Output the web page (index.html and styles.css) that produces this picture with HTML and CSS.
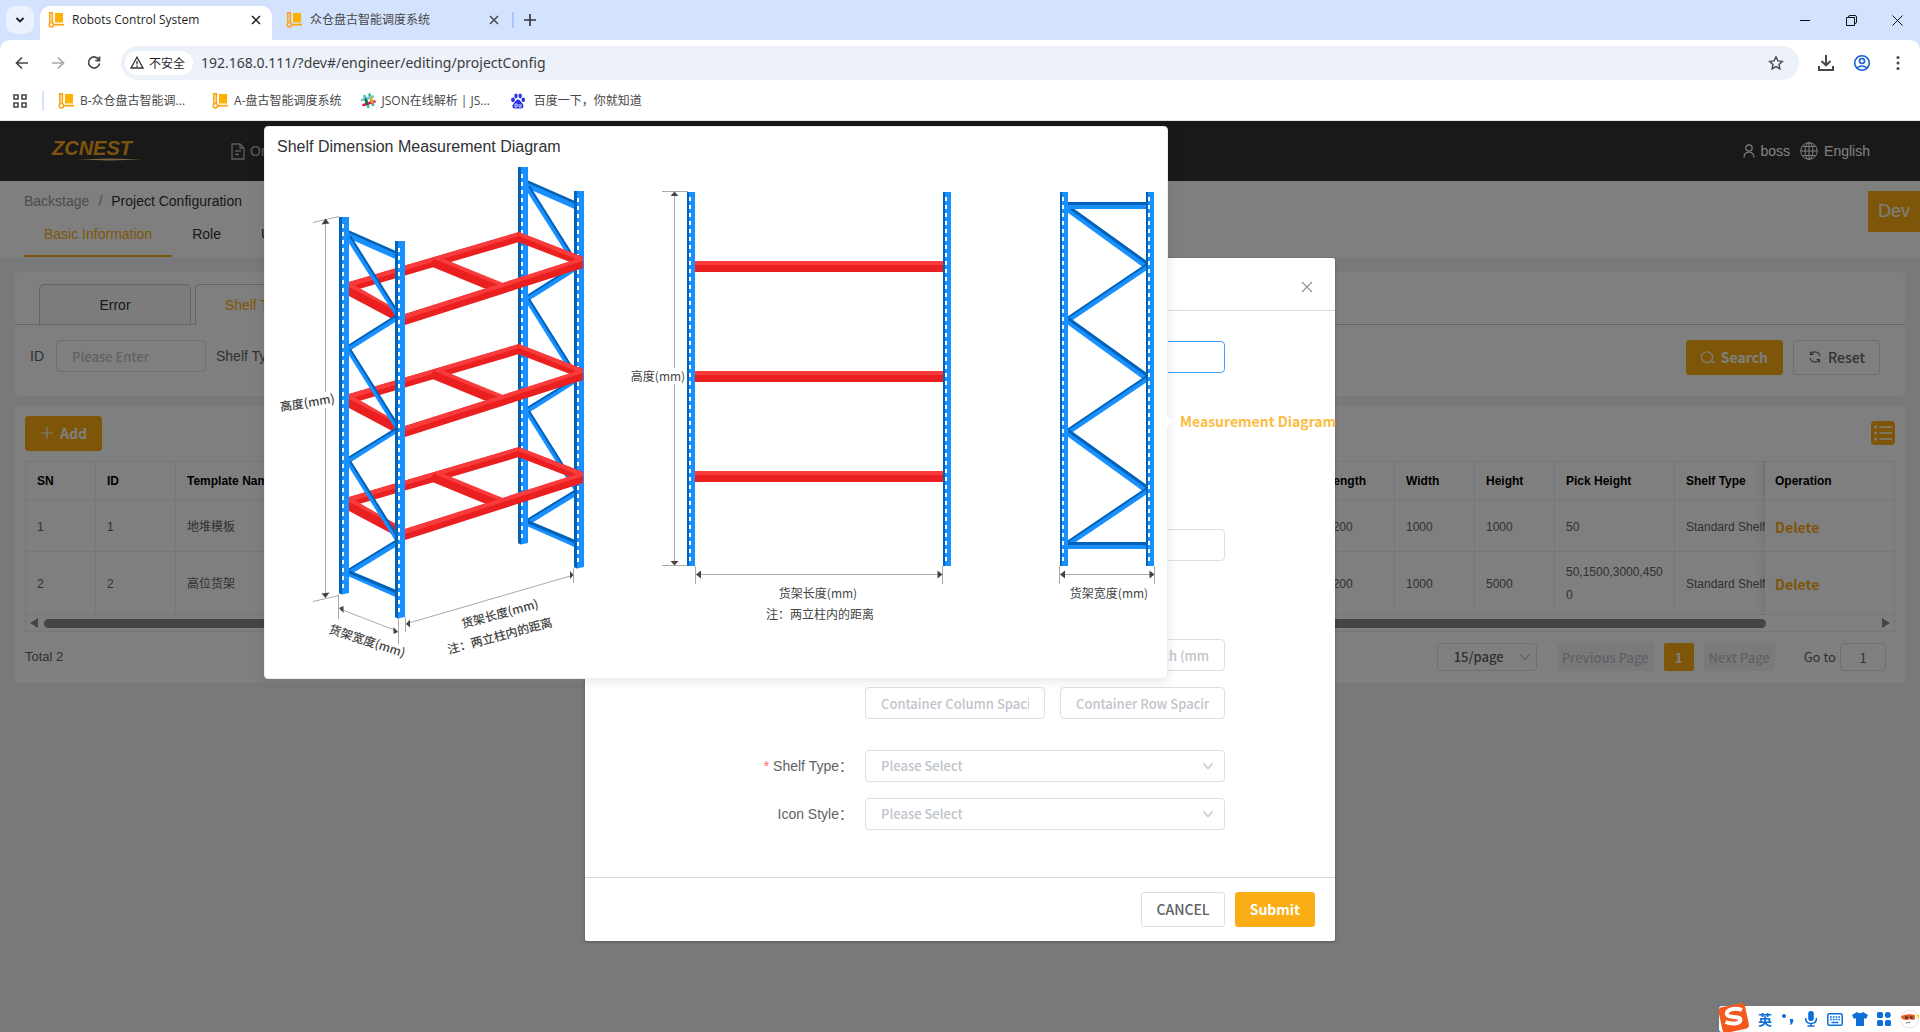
FILE: index.html
```html
<!DOCTYPE html>
<html lang="en">
<head>
<meta charset="utf-8">
<title>Robots Control System</title>
<link rel="stylesheet" href="styles.css">
</head>
<body>
<svg class="defs" aria-hidden="true">
  <defs>
    <symbol id="fav" viewBox="0 0 16 16">
      <path d="M.8.8H4.300V10.500M1.800 1V10.500" fill="none" stroke="#fba414" stroke-width="1.600"/>
      <circle cx="3.400" cy="12.700" r="2.200" fill="none" stroke="#fba414" stroke-width="1.500"/>
      <path d="M7 1h8v9.500H7z" fill="#ffb000"/><path d="M6 11.800h10v1.800H6z" fill="#fba414"/>
    </symbol>
    <symbol id="caret" viewBox="0 0 12 12"><path d="M1.500 3.500 6 8.500l4.500-5" fill="none" stroke="#c0c4cc" stroke-width="1.200"/></symbol>
    <g id="post-iso">
      <path d="M0 0h10v376l-7 1.500L0 376z" fill="#1890ff"/>
      <path d="M0 0h3v377.500L0 376z" fill="#0062b8"/>
      <path d="M4 7v364" stroke="#fff" stroke-width="2" stroke-dasharray="4 4"/>
    </g>
    <g id="post">
      <path d="M0 0h8v374H0z" fill="#1890ff"/>
      <path d="M0 0h2v374H0z" fill="#0062b8"/>
      <path d="M3 5v365" stroke="#fff" stroke-width="2" stroke-dasharray="4 4"/>
    </g>
    <g id="frame">
      <g stroke="#1890ff" stroke-width="5" fill="none">
        <path d="M347 235 397 257M348 237 397 314M397 318 348 349M348 349 397 427M397 430 348 461M348 461 397 539M397 543 348 573M347 573 397 595"/>
      </g>
      <g stroke="#0062b8" stroke-width="3" fill="none">
        <path d="M347 231 397 253"/>
        <path d="M350 236 397 311M350 349 397 424M350 461 397 536" stroke-width="2"/>
        <path d="M397 315 348 346M397 428 348 458M397 540 348 570" stroke-width="2"/>
        <path d="M347 571 397 592"/>
      </g>
      <use href="#post-iso" x="339" y="217"/>
      <use href="#post-iso" x="395" y="241"/>
    </g>
    <g id="shelf">
      <path d="M349 282 519 232V242L349 292z" fill="#ea1f1f"/>
      <path d="M349 282 519 232V236L349 287z" fill="#f93b3b"/>
      <path d="M349 284 396 309V321L349 296z" fill="#ea1f1f"/>
      <path d="M349 282 396 309V311L349 287z" fill="#f93b3b"/>
      <path d="M434 258 501 284 486 289 430 266z" fill="#ea1f1f"/>
      <path d="M439 257 503 283 498 285 434 259z" fill="#f93b3b"/>
      <path d="M518 232 583 257V267L518 242z" fill="#ea1f1f"/>
      <path d="M519 232 583 257V262L519 236z" fill="#f93b3b"/>
      <path d="M405 314 583 258V268L405 325z" fill="#ea1f1f"/>
      <path d="M405 314 583 257V261L405 319z" fill="#f93b3b"/>
    </g>
  </defs>
</svg>

<header class="browser">
  <div class="tabstrip">
    <button class="tab-search" aria-label="Search tabs"><svg width="10" height="10" viewBox="0 0 10 10"><path d="M1.500 3 5 6.500 8.500 3" fill="none" stroke="#1f1f1f" stroke-width="1.800"/></svg></button>
    <div class="tab tab-active"><svg class="fav"><use href="#fav"/></svg><span>Robots Control System</span><button class="x" aria-label="Close tab"><svg width="10" height="10" viewBox="0 0 10 10"><path d="m1 1 8 8M9 1 1 9" stroke="#1f1f1f" stroke-width="1.500"/></svg></button></div>
    <div class="tab"><svg class="fav"><use href="#fav"/></svg><span>众仓盘古智能调度系统</span><button class="x" aria-label="Close tab"><svg width="10" height="10" viewBox="0 0 10 10"><path d="m1 1 8 8M9 1 1 9" stroke="#474747" stroke-width="1.500"/></svg></button></div>
    <button class="newtab" aria-label="New tab"><svg width="12" height="12" viewBox="0 0 12 12"><path d="M6 0v12M0 6h12" stroke="#333" stroke-width="1.600"/></svg></button>
    <div class="winctl">
      <button aria-label="Minimise"><svg width="11" height="11" viewBox="0 0 11 11"><path d="M0 5.500h10" stroke="#111"/></svg></button>
      <button aria-label="Restore"><svg width="11" height="11" viewBox="0 0 11 11"><path d="M.5 2.500h8v8h-8zM2.500 2.500V2Q2.500.5 4 .5h5Q10.500.5 10.500 2v5Q10.500 8.500 9 8.500" fill="none" stroke="#111"/></svg></button>
      <button aria-label="Close"><svg width="11" height="11" viewBox="0 0 11 11"><path d="m.5.5 10 10M10.500.5l-10 10" stroke="#111"/></svg></button>
    </div>
  </div>
  <div class="toolbar">
    <button aria-label="Back"><svg width="16" height="16" viewBox="0 0 16 16"><path d="M14 8H3M8 2.500 2.500 8 8 13.500" fill="none" stroke="#474747" stroke-width="1.700"/></svg></button>
    <button aria-label="Forward"><svg width="16" height="16" viewBox="0 0 16 16"><path d="M2 8h11M8 2.500 13.500 8 8 13.500" fill="none" stroke="#a8a8a8" stroke-width="1.700"/></svg></button>
    <button aria-label="Reload"><svg width="16" height="16" viewBox="0 0 16 16"><path d="M13 5A5.500 5.500 0 1 0 13.500 8.500M13.500 1.500V5.700H9.300" fill="none" stroke="#474747" stroke-width="1.700"/></svg></button>
    <div class="omnibox">
      <button class="chip"><svg width="14" height="13" viewBox="0 0 14 13"><path d="M7 1.200 13 12H1zM7 5v3.500M7 9.500V11" fill="none" stroke="#333" stroke-width="1.300"/></svg>不安全</button>
      <input class="url" aria-label="Address" value="192.168.0.111/?dev#/engineer/editing/projectConfig">
      <button class="star" aria-label="Bookmark"><svg width="16" height="16" viewBox="0 0 16 16"><path d="m8 1.800 1.900 4.100 4.400.5-3.300 3 .9 4.400L8 11.600l-3.900 2.200.9-4.400-3.300-3 4.400-.5z" fill="none" stroke="#474747" stroke-width="1.400"/></svg></button>
    </div>
    <button class="tool" aria-label="Downloads"><svg width="18" height="18" viewBox="0 0 18 18"><path d="M9 1v10M4.500 7 9 11.300 13.500 7M2 12v4h14v-4" fill="none" stroke="#474747" stroke-width="2"/></svg></button>
    <button class="tool" aria-label="Profile"><svg width="18" height="18" viewBox="0 0 18 18" fill="none" stroke="#1a5fd0" stroke-width="1.600"><circle cx="9" cy="9" r="7.300"/><circle cx="9" cy="7" r="2.500"/><path d="M4 14q5-4 10 0"/></svg></button>
    <button class="tool" aria-label="Menu"><svg width="18" height="18" viewBox="0 0 18 18" fill="#474747"><circle cx="9" cy="3.500" r="1.500"/><circle cx="9" cy="9" r="1.500"/><circle cx="9" cy="14.500" r="1.500"/></svg></button>
  </div>
  <nav class="bookmarks" aria-label="Bookmarks">
    <svg class="apps" width="14" height="14" viewBox="0 0 14 14"><path d="M1 1h4v4H1zM9 1h4v4H9zM1 9h4v4H1zM9 9h4v4H9z" fill="none" stroke="#474747" stroke-width="1.600"/></svg>
    <a href="#"><svg class="fav"><use href="#fav"/></svg>B-众仓盘古智能调...</a>
    <a href="#" class="bm-a"><svg class="fav"><use href="#fav"/></svg>A-盘古智能调度系统</a>
    <a href="#" class="bm-json"><svg class="fav" viewBox="0 0 16 16"><g stroke-width="2.600" stroke-linecap="round"><path d="M4.500 3 8.300 14" stroke="#36c5b0"/><path d="M9.500 1.500 13 12" stroke="#3eb890"/><path d="M2 7 13 3.500" stroke="#70cadb"/><path d="M3.500 12 14.500 8.500" stroke="#e01765"/><path d="M5.800 6.500 7.200 10.700" stroke="#1d6b3a"/><path d="M10.900 5.200 12.400 9.400" stroke="#e9a820"/></g></svg>JSON在线解析 | JS...</a>
    <a href="#" class="bm-bd"><svg class="fav" viewBox="0 0 16 16" fill="#2932e1"><ellipse cx="3" cy="6.800" rx="1.900" ry="2.400"/><ellipse cx="6" cy="3" rx="1.700" ry="2.400"/><ellipse cx="10.200" cy="3" rx="1.700" ry="2.400"/><ellipse cx="13.300" cy="6.800" rx="1.800" ry="2.300"/><path d="M8 6.500c2 0 2.500 2 4 3.500 2.500 2.500 1.500 5.500-1 5.500H5c-2.800 0-3.500-3-1-5.500 1.500-1.500 2-3.500 4-3.500z"/><path d="M5 11h2v3H5zM9 11v3h2v-3" fill="none" stroke="#fff" stroke-width=".8"/></svg>百度一下，你就知道</a>
  </nav>
</header>

<div class="viewport">
  <header class="appbar">
    <div class="logo"><span>ZCNEST</span><svg width="64" height="3" viewBox="0 0 64 3"><path d="M0 1.500 32 .5l32 1-32 1z" fill="#f8cf80"/></svg></div>
    <a class="menu" href="#"><svg width="14" height="17" viewBox="0 0 14 17"><path d="M1 1h8l4 4v11H1zM9 1v4h4M4 8h6M4 11.500h4" fill="none" stroke="#bbb" stroke-width="1.300"/></svg>Or</a>
    <div class="userbox">
      <span class="user"><svg width="12" height="14" viewBox="0 0 12 14"><circle cx="6" cy="4" r="3.200" fill="none" stroke="#fff" stroke-width="1.200"/><path d="M1 13.500q0-5 5-5.500 5 .5 5 5.500" fill="none" stroke="#fff" stroke-width="1.200"/></svg>boss</span>
      <span class="lang"><svg width="18" height="18" viewBox="0 0 18 18" fill="none" stroke="#fff"><circle cx="9" cy="9" r="8.300"/><ellipse cx="9" cy="9" rx="4" ry="8.300"/><path d="M9 .7v16.600M.7 9h16.600M2.300 4.500h13.400M2.300 13.500h13.400"/></svg>English</span>
    </div>
  </header>
  <div class="subhead">
    <nav class="crumbs"><a href="#">Backstage</a><i>/</i><span>Project Configuration</span></nav>
    <nav class="maintabs"><a href="#" class="on">Basic Information</a><a href="#">Role</a><a href="#">User</a></nav>
  </div>
  <button class="dev">Dev</button>

  <main>
    <section class="card filter">
      <div class="subtabs"><button>Error</button><button class="on">Shelf Template</button></div>
      <form class="search">
        <label for="q-id">ID</label><input id="q-id" placeholder="Please Enter">
        <label for="q-type">Shelf Type</label><input id="q-type" placeholder="Please Select">
        <button type="button" class="btn primary push"><svg width="14" height="14" viewBox="0 0 14 14"><path d="M9.800 11.200A5.500 5.500 0 1 1 11 9.500M10 10l3 3" fill="none" stroke="#fff" stroke-width="1.200"/></svg>Search</button>
        <button type="button" class="btn"><svg width="14" height="14" viewBox="0 0 14 14" fill="none" stroke="#606266" stroke-width="1.200"><path d="M12 6A5 5 0 0 0 4 3L2.500 4.500M2.500 1.500v3h3M2 8a5 5 0 0 0 8 3l1.500-1.500M11.500 12.500v-3h-3"/></svg>Reset</button>
      </form>
    </section>

    <section class="card list">
      <div class="listbar">
        <button class="btn primary"><svg width="14" height="14" viewBox="0 0 14 14"><path d="M7 1v12M1 7h12" stroke="#fff" stroke-width="1.200"/></svg>Add</button>
        <button class="cols" aria-label="Columns"><svg width="24" height="24" viewBox="0 0 24 24"><g fill="#fff"><circle cx="4.500" cy="6" r="1.500"/><circle cx="4.500" cy="12" r="1.500"/><circle cx="4.500" cy="18" r="1.500"/></g><path d="M8.500 6H21M8.500 12H21M8.500 18H21" stroke="#fff" stroke-width="1.700"/></svg></button>
      </div>
      <div class="tablebox">
        <table>
          <colgroup><col class="w70"><col class="w80"><col><col class="w80"><col class="w80"><col class="w80"><col class="w120"><col class="w90"><col class="w129"></colgroup>
          <thead><tr><th>SN</th><th>ID</th><th>Template Name</th><th>Length</th><th>Width</th><th>Height</th><th>Pick Height</th><th>Shelf Type</th><th class="op">Operation</th></tr></thead>
          <tbody>
            <tr><td>1</td><td>1</td><td>地堆模板</td><td>1200</td><td>1000</td><td>1000</td><td>50</td><td class="clip">Standard Shelf</td><td class="op"><a href="#">Delete</a></td></tr>
            <tr class="tall"><td>2</td><td>2</td><td>高位货架</td><td>1200</td><td>1000</td><td>5000</td><td>50,1500,3000,4500</td><td class="clip">Standard Shelf</td><td class="op"><a href="#">Delete</a></td></tr>
          </tbody>
        </table>
        <div class="hscroll"><svg width="8" height="10" viewBox="0 0 8 10"><path d="M8 0v10L0 5z" fill="#8b8b8b"/></svg><span class="thumb"></span><svg class="end" width="8" height="10" viewBox="0 0 8 10"><path d="M0 0v10l8-5z" fill="#8b8b8b"/></svg></div>
      </div>
      <div class="pager">
        <span class="total">Total 2</span>
        <div class="selbox pagesize"><select aria-label="Page size"><option>15/page</option></select><svg class="caret"><use href="#caret"/></svg></div>
        <button class="pg prev">Previous Page</button><button class="pg cur">1</button><button class="pg next">Next Page</button>
        <label for="goto">Go to</label><input id="goto" value="1">
      </div>
    </section>
  </main>

  <div class="mask">
    <div class="dialog" role="dialog">
      <div class="dlg-head"><button aria-label="Close"><svg width="12" height="12" viewBox="0 0 12 12"><path d="m1 1 10 10M11 1 1 11" stroke="#909399" stroke-width="1.200"/></svg></button></div>
      <form class="dlg-body">
        <div class="group"><div class="row"><label for="f1">Template Name：</label><div class="ctl"><input id="f1" class="focus"></div></div></div>
        <div class="group measure"><div class="row"><label for="f2">Shelf Size：</label><div class="ctl"><input id="f2"><a href="#">Measurement Diagram</a></div></div></div>
        <div class="group">
          <div class="row"><label for="f3">Height：</label><div class="ctl"><input id="f3" class="half"></div></div>
          <div class="row"><label for="f4">Levels：</label><div class="ctl"><input id="f4"></div></div>
        </div>
        <div class="group">
          <div class="row"><label for="f5">Container：</label><div class="ctl"><input id="f5" class="half"></div></div>
          <div class="row"><label></label><div class="ctl"><input class="half" aria-label="Container Length" placeholder="Container Length (mm)"><input aria-label="Container Width" placeholder="Container Width (mm)"></div></div>
          <div class="row"><label></label><div class="ctl"><input class="half" aria-label="Container Column Spacing" placeholder="Container Column Spacing (mm)"><input aria-label="Container Row Spacing" placeholder="Container Row Spacing (mm)"></div></div>
        </div>
        <div class="group">
          <div class="row"><label for="f6"><b>*</b> Shelf Type：</label><div class="ctl selbox"><select id="f6"><option>Please Select</option></select><svg class="caret"><use href="#caret"/></svg></div></div>
          <div class="row"><label for="f7">Icon Style：</label><div class="ctl selbox"><select id="f7"><option>Please Select</option></select><svg class="caret"><use href="#caret"/></svg></div></div>
        </div>
      </form>
      <div class="dlg-foot"><button class="btn">CANCEL</button><button class="btn primary">Submit</button></div>
    </div>
  </div>

  <div class="popover">
    <h2>Shelf Dimension Measurement Diagram</h2>
    <svg class="diagram" viewBox="277 160 878 505" role="img" aria-label="Shelf dimensions">
      <use href="#frame" x="179" y="-50"/>
      <use href="#shelf"/><use href="#shelf" y="112"/><use href="#shelf" y="215"/>
      <use href="#frame"/>
      <g class="dim">
        <path d="M325.500 222V392M325.500 408V594M313 222.500 339 216.500M313 601.500 339 595.500"/>
        <path d="M338.500 594v25M398.500 618v26M340 609 397 631M405.500 617v15M573.500 568v15M407 623.500 572 575.500"/>
        <path d="M674.500 193V368M674.500 384V564M662 191.500h26M662 565.500h26M695.500 566v18M942.500 566v18M697 574.500h244"/>
        <path d="M1059.500 566v18M1154.500 566v18M1061 574.500h92"/>
      </g>
      <g fill="#444">
        <path d="M325.500 218.500l4 5-8 1zM325.500 598l-4-4.500 8-1zM339 608l4.500-2v7zM398 632l-4.500-5v7zM406 624l4-4.500v8zM573.500 575l-3.500-4v8z"/>
        <path d="M674.500 191.500l4 4.500h-8zM674.500 565.500l-4-4.500h8zM696 574.500l5-4v8zM942.500 574.500l-5-4v8zM1060 574.500l5-4v8zM1154.500 574.500l-5-4v8z"/>
      </g>
      <use href="#post" x="687" y="192"/><use href="#post" x="943" y="192"/>
      <g fill="#ea1f1f"><path d="M695 261h248v11H695zM695 371h248v11H695zM695 471h248v11H695z"/></g>
      <g fill="#f93b3b"><path d="M695 261h248v4H695zM695 371h248v4H695zM695 471h248v4H695z"/></g>
      <g stroke="#1890ff" stroke-width="5"><path d="M1067 209 1147 267M1147 267 1067 321M1067 321 1147 379M1147 379 1067 433M1067 433 1147 491M1147 491 1067 545"/></g>
      <g stroke="#0062b8" stroke-width="3"><path d="M1069 207 1147 263M1069 319 1147 375M1069 431 1147 487"/><path d="M1147 264 1067 318M1147 376 1067 430M1147 488 1067 542" stroke-width="2"/></g>
      <path d="M1067 205h80v4h-80zM1067 545h80v4h-80z" fill="#1890ff"/><path d="M1067 202h80v3h-80zM1067 542h80v3h-80z" fill="#0062b8"/>
      <use href="#post" x="1060" y="192"/><use href="#post" x="1146" y="192"/>
      <g class="lbl">
        <text x="658" y="381">高度(mm)</text><text x="818" y="598">货架长度(mm)</text><text x="820" y="619">注：两立柱内的距离</text><text x="1109" y="598">货架宽度(mm)</text>
        <g class="strong">
          <text transform="translate(308 407) rotate(-9)">高度(mm)</text>
          <text transform="translate(366 645) rotate(18)">货架宽度(mm)</text>
          <text transform="translate(501 618) rotate(-15)">货架长度(mm)</text>
          <text transform="translate(501 640) rotate(-15)">注：两立柱内的距离</text>
        </g>
      </g>
    </svg>
  </div>

  <div class="ime">
    <svg class="sogou" width="32" height="30" viewBox="0 0 32 30"><rect x="2" y="3" width="27" height="26" rx="4" transform="rotate(-12 16 15)" fill="#f4581c"/><path d="M24 8C16 5 8 8 9 12.500c1 4 14 1 13.500 5.500-.5 4-9 4.500-15 2" fill="none" stroke="#fff" stroke-width="4"/></svg>
    <span>英</span>
    <svg width="14" height="14" viewBox="0 0 14 14" fill="#0d6fd8"><circle cx="3" cy="4" r="2"/><path d="M9 7h3q1 4-2.500 6l-.5-.8Q10.500 11 9 10z"/></svg>
    <svg width="14" height="16" viewBox="0 0 14 16"><rect x="4.200" y="0" width="5.600" height="10" rx="2.800" fill="#0d6fd8"/><path d="M1.500 7q0 5.500 5.500 5.500T12.500 7M7 12.500V15M3.500 15h7" fill="none" stroke="#0d6fd8" stroke-width="1.500"/></svg>
    <svg width="16" height="13" viewBox="0 0 16 13"><rect x=".8" y=".8" width="14.400" height="11.400" rx="1.500" fill="none" stroke="#0d6fd8" stroke-width="1.500"/><path d="M3 4h10M3 6.500h10" stroke="#0d6fd8" stroke-width="1.500" stroke-dasharray="1.800 1"/><path d="M4.500 9.500h7" stroke="#0d6fd8" stroke-width="1.500"/></svg>
    <svg width="16" height="14" viewBox="0 0 16 14"><path d="M5 0q3 2.500 6 0l5 3-2 4-2-1v8H4V6L2 7 0 3z" fill="#0d6fd8"/></svg>
    <svg width="14" height="14" viewBox="0 0 14 14" fill="#0d6fd8"><rect width="6" height="6" rx="1.500"/><circle cx="10.800" cy="3" r="3"/><rect y="8" width="6" height="6" rx="1.500"/><rect x="8" y="8" width="6" height="6" rx="1.500"/></svg>
    <svg width="20" height="20" viewBox="0 0 20 20"><circle cx="9.500" cy="10" r="9" fill="#fff" stroke="#f3dcdc"/><path d="M1 7q7-3 14-1v4q-3 2-5 0-3 2-8 0z" fill="#e85a22"/><path d="M5 7.500h3v2H5zM10 7.500h2.500v2H10zM5 14q4 1 6-1" fill="#333"/><path d="m18 4 .7 2.300L20 7l-1.300.7L18 10l-.7-2.300L16 7l1.300-.7z" fill="#fc3"/></svg>
  </div>
</div>
</body>
</html>
```
FILE: styles.css
```css
* { box-sizing: border-box; }
html, body { margin: 0; height: 100%; }
body {
  display: flex; flex-direction: column; overflow: hidden;
  font: 14px/20px "Liberation Sans", Arial, "Noto Sans CJK SC", sans-serif;
  color: #606266; background: #fff;
}
button, input, select { font-family: inherit; font-size: inherit; color: inherit; margin: 0; }
button { border: 0; background: none; padding: 0; cursor: pointer; }
a { color: inherit; text-decoration: none; }
svg { flex: none; display: block; }
.defs { position: absolute; width: 0; height: 0; }

/* browser chrome */
.browser { flex: none; background: #d3e3fd; font: 12px/16px "Open Sans", "Noto Sans CJK SC", sans-serif; color: #1f1f1f; }
.tabstrip { display: flex; height: 40px; padding: 6px 0 0 6px; }
.tab-search { width: 28px; height: 28px; border-radius: 10px; background: #ebf2fe; display: grid; place-items: center; margin-right: 6px; }
.fav { width: 16px; height: 16px; }
.tab { display: flex; align-items: center; gap: 8px; width: 232px; height: 34px; padding: 0 11px 6px 8px; color: #474747; }
.tab + .tab { width: 240px; padding: 0 13px 6px 14px; }
.tab span { flex: 1; white-space: nowrap; }
.tab-active { background: #fff; border-radius: 10px 10px 0 0; color: #1f1f1f; }
.newtab { border-left: 2px solid #a8c7fa; height: 16px; margin-top: 6px; padding-left: 10px; }
.winctl { margin-left: auto; display: flex; height: 28px; }
.winctl button { width: 46px; display: grid; place-items: center; }
.toolbar { display: flex; align-items: center; height: 46px; padding: 0 13px 1px 14px; background: #fff; border-radius: 10px 10px 0 0; }
.toolbar > button { margin-right: 20px; }
.toolbar > .tool { margin: 0 0 0 18px; }
.toolbar > .tool:last-child { margin-right: 0; }
.omnibox { flex: 1; display: flex; align-items: center; height: 34px; margin-left: -1px; padding: 0 15px 0 4px; border-radius: 17px; background: #edf1fa; }
.chip { display: flex; align-items: center; gap: 5px; height: 24px; padding: 0 8px 0 5px; border-radius: 12px; background: #fff; }
.url { flex: 1; border: 0; background: none; outline: 0; padding: 0 8px; font: 14px/20px "Noto Sans", sans-serif; color: #3c3c3c; }
.bookmarks { display: flex; align-items: center; height: 35px; padding: 0 0 5px 13px; background: #fff; border-bottom: 1px solid #e3e3e3; color: #474747; }
.bookmarks a { display: flex; align-items: center; gap: 6px; white-space: nowrap; }
.apps { margin-right: 15px; }
.apps + a { border-left: 2px solid #d3e3fd; padding-left: 14px; height: 20px; }
.bookmarks .bm-a { margin-left: 27px; }
.bookmarks .bm-json { margin-left: 18px; }
.bookmarks .bm-bd { margin-left: 20px; gap: 8px; }

/* application */
.viewport { position: relative; flex: 1; background: #f0f2f5; overflow: hidden; }
.appbar { display: flex; align-items: center; height: 60px; padding: 0 50px 0 52px; background: #333; color: #fff; }
.logo { width: 179px; height: 26px; color: #f8a91a; }
.logo span { display: block; font: italic bold 20px/20px "Liberation Sans", sans-serif; }
.logo svg { margin: 0 0 0 26px; }
.menu { display: flex; align-items: center; gap: 5px; color: #bbb; }
.userbox { margin-left: auto; display: flex; align-items: center; gap: 10px; }
.user, .lang { display: flex; align-items: center; gap: 6px; }
.subhead { height: 76px; padding: 10px 24px 0; background: #fff; }
.crumbs { color: #999; }
.crumbs i { margin: 0 9px; font-style: normal; }
.crumbs span { color: #333; }
.maintabs { display: flex; margin-top: 5px; color: #303133; }
.maintabs a { padding: 8px 20px 11px; height: 41px; }
.maintabs .on { color: #faad14; border-bottom: 2px solid #faad14; }
.dev { position: absolute; top: 70px; right: 0; width: 52px; height: 41px; background: #faad14; color: #fff; font-size: 18px; }
main { padding: 15px; }
.card { background: #fff; border-radius: 4px; }
.filter { height: 124px; margin-bottom: 10px; }
.subtabs { display: flex; gap: 4px; padding: 12px 0 0 24px; height: 53px; border-bottom: 1px solid #c6c7ca; }
.subtabs button { width: 152px; height: 41px; border: 1px solid #c6c7ca; border-radius: 5px 5px 0 0; background: #f8f8f8; color: #303133; }
.subtabs .on { background: #fff; border-bottom-color: #fff; color: #faad14; }
.search { display: flex; align-items: center; padding: 15px 25px 0 15px; }
.search label { margin: 0 10px 3px 0; }
.search input { width: 150px; margin: 0 10px 3px 2px; }
input, select {
  height: 32px; border: 1px solid #dcdfe6; border-radius: 4px; background: #fff; padding: 0 15px; outline: 0;
  font: 13px/20px "Noto Sans CJK SC", sans-serif; color: #606266;
}
input::placeholder { color: #c0c4cc; opacity: 1; font-weight: 500; }
.btn {
  display: flex; align-items: center; gap: 6px; height: 35px; padding: 0 14px 1px; border: 1px solid #dcdfe6; border-radius: 3px;
  background: #fff; color: #606266; font: 500 14px/20px "Noto Sans CJK SC", sans-serif;
}
.btn.primary { background: #faad14; border-color: #faad14; color: #fff; font-weight: 700; }
.push { margin: 0 10px 0 auto; }
.list { padding: 10px 10px 12px; }
.listbar { display: flex; justify-content: space-between; align-items: center; margin-bottom: 10px; }
.cols { background: #faad14; border-radius: 4px; margin-bottom: 2px; }
.tablebox { border: 1px solid #ebeef5; border-top: 0; }
table { width: 100%; table-layout: fixed; border-collapse: separate; border-spacing: 0; font-size: 12px; line-height: 23px; }
.w70 { width: 70px; } .w80 { width: 80px; } .w90 { width: 90px; } .w120 { width: 120px; } .w129 { width: 129px; }
th, td { text-align: left; padding: 0 9px 0 11px; border: 0 solid #ebeef5; border-width: 0 1px 1px 0; overflow-wrap: anywhere; }
th { height: 40px; border-top-width: 1px; color: #000; }
td { height: 51px; padding-top: 2px; }
.tall td { height: 63px; border-bottom-width: 1px; }
.clip { white-space: nowrap; overflow: hidden; padding-right: 0; border-right: 0; }
.op { padding-left: 10px; box-shadow: -2px 0 8px rgba(0, 0, 0, .12); border-right: 0; clip-path: inset(0 0 0 -10px); }
td.op { padding-top: 6px; }
td a { color: #faad14; font: 700 14px/20px "Noto Sans CJK SC", sans-serif; }
.hscroll { display: flex; align-items: center; height: 16px; padding: 0 4px; }
.thumb { flex: 1; height: 9px; margin: 0 116px 0 6px; border-radius: 5px; background: #8b8b8b; }
.pager { display: flex; align-items: center; margin-top: 11px; font: 13px/28px "Noto Sans CJK SC", sans-serif; padding-right: 9px; }
.total { font-family: "Liberation Sans", sans-serif; margin-right: auto; }
.selbox { position: relative; display: flex; }
.selbox select { appearance: none; width: 100%; color: #c0c4cc; font-weight: 500; }
.caret { position: absolute; right: 11px; top: 50%; margin-top: -6px; width: 12px; height: 12px; }
.pagesize { width: 100px; margin-right: 20px; }
.pager select { height: 28px; font-size: 13px; padding: 0 16px; color: #606266; }
.pagesize .caret { right: 6px; }
.pg { height: 28px; border-radius: 2px; background: #f4f4f5; color: #c0c4cc; margin-right: 10px; white-space: nowrap; font-weight: 500; }
.prev { width: 97px; } .next { width: 71px; }
.cur { width: 30px; background: #faad14; color: #fff; font-weight: 700; }
.pager label { margin: 0 4px 0 19px; }
.pager input { width: 46px; height: 28px; padding: 0; text-align: center; }

/* overlays */
.mask { position: absolute; inset: 0; background: rgba(0, 0, 0, .5); }
.dialog { width: 750px; margin: 137px auto 0; background: #fff; border-radius: 2px; box-shadow: 0 1px 3px rgba(0, 0, 0, .3); }
.dlg-head { display: flex; justify-content: flex-end; align-items: center; height: 53px; padding: 6px 22px 0 0; border-bottom: 1px solid #d8d9dc; }
.dlg-body { display: flex; flex-direction: column; gap: 30px; padding: 30px 0 47px; }
.group { display: flex; flex-direction: column; gap: 16px; }
.group:last-child { padding-top: 1px; }
.row { display: flex; align-items: center; }
.row label { width: 268px; margin-right: 12px; text-align: right; }
.row b { color: #f56c6c; font-weight: 400; }
.ctl { display: flex; gap: 15px; width: 360px; }
.ctl input { flex: 1; min-width: 0; }
.ctl .half { flex: 0 0 180px; }
.focus { border-color: #409eff; }
.measure { height: 48px; }
.measure .row { height: 36px; }
.measure .ctl { gap: 35px; align-items: center; }
.measure input { flex: 0 0 280px; }
.measure a { white-space: nowrap; color: #fbbd43; font: 700 14px/20px "Noto Sans CJK SC", sans-serif; }
.dlg-foot { display: flex; justify-content: flex-end; gap: 10px; padding: 14px 20px; border-top: 1px solid #d8d9dc; }
.popover {
  position: absolute; top: 5px; left: calc(50% - 696px); width: 904px; padding: 9px 12px 13px; background: #fff;
  border: 1px solid #ebeef5; border-radius: 4px; box-shadow: 0 2px 12px rgba(0, 0, 0, .1);
}
.popover::after {
  content: ""; position: absolute; top: 290px; right: -4px; width: 8px; height: 8px; background: #fff; transform: rotate(45deg);
}
.popover h2 { margin: 0 0 2px; font-weight: 400; font-size: 16px; line-height: 22px; color: #303133; }
.diagram { width: 100%; height: auto; }
.dim { fill: none; stroke: #aaa; stroke-width: 1; }
.lbl { font: 12px "Noto Sans CJK SC", sans-serif; fill: #444; text-anchor: middle; }
.strong { font-weight: 500; }
.ime {
  position: absolute; right: 0; bottom: 0; display: flex; align-items: center; gap: 9px; height: 26px; padding-left: 39px;
  background: #fff; border-radius: 3px 0 0 3px;
}
.sogou { position: absolute; left: -1px; bottom: 0; }
.ime span { font: 700 14px/20px "Noto Sans CJK SC", sans-serif; color: #0d6fd8; }
```
